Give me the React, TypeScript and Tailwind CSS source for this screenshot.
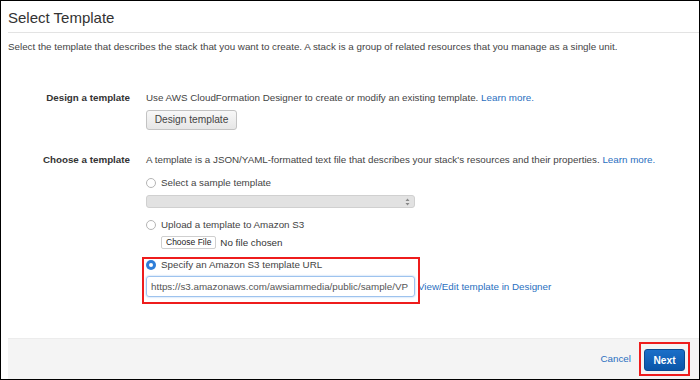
export default function App() {
	return (
		<div
			className="relative flex h-[380px] w-[700px] flex-col border border-black bg-white text-[#444]"
			style={{ fontFamily: '"Liberation Sans", Arial, sans-serif' }}
		>
			<div className="flex flex-1 flex-col pl-[7px]">
				{/* header */}
				<div className="border-b border-[#e3e3e3] pt-[7px] pb-[5px]">
					<h1 className="text-[15px] leading-[19px] text-[#333]">Select Template</h1>
				</div>
				<p className="mt-[7px] whitespace-nowrap text-[9.8px] leading-[14px]">
					Select the template that describes the stack that you want to create. A stack is a group of related resources that you manage as a single unit.
				</p>

				{/* design a template */}
				<div className="mt-[37px] flex gap-[16px] text-[9.8px] leading-[14px]">
					<div className="w-[122px] shrink-0 text-right font-bold text-[#333]">Design a template</div>
					<div className="flex flex-col items-start">
						<p className="whitespace-nowrap">
							Use AWS CloudFormation Designer to create or modify an existing template.{' '}
							<a className="text-[#2a6fc0]">Learn more.</a>
						</p>
						<button className="mt-[5px] h-[20px] w-[91px] rounded-[3px] border border-[#c3c3c3] bg-gradient-to-b from-[#f8f8f8] to-[#e6e6e6] text-[10.2px] text-[#444]">
							Design template
						</button>
					</div>
				</div>

				{/* choose a template */}
				<div className="mt-[23px] flex gap-[16px] text-[9.8px] leading-[14px]">
					<div className="w-[122px] shrink-0 text-right font-bold text-[#333]">Choose a template</div>
					<div className="flex flex-col items-start">
						<p className="whitespace-nowrap">
							A template is a JSON/YAML-formatted text file that describes your stack's resources and their properties.{' '}
							<a className="text-[#2a6fc0]">Learn more.</a>
						</p>
						<label className="mt-[9px] flex items-center gap-[5px]">
							<span className="h-[10px] w-[10px] rounded-full border border-[#b5b5b5] bg-white" />
							<span>Select a sample template</span>
						</label>
						<div className="mt-[5px] flex h-[13px] w-[269px] items-center justify-end rounded-[3px] border border-[#d0d0d0] bg-[#e2e2e2] pr-[4px]">
							<svg width="5" height="8" viewBox="0 0 5 8">
								<path d="M2.5 0.5 L4.5 3 H0.5 Z M2.5 7.5 L4.5 5 H0.5 Z" fill="#888" />
							</svg>
						</div>
						<label className="mt-[10px] flex items-center gap-[5px]">
							<span className="h-[10px] w-[10px] rounded-full border border-[#b5b5b5] bg-white" />
							<span>Upload a template to Amazon S3</span>
						</label>
						<div className="mt-[4px] ml-[15px] flex h-[13px] items-center gap-[4px]">
							<span className="flex h-[13px] items-center rounded-[2px] border border-[#cfcfcf] bg-white px-[4px] text-[8.5px] leading-none text-[#222]">
								Choose File
							</span>
							<span className="text-[9.8px] text-[#333]">No file chosen</span>
						</div>
						<label className="mt-[9px] flex items-center gap-[5px]">
							<span className="flex h-[10px] w-[10px] items-center justify-center rounded-full bg-[#2f7ed8]">
								<span className="h-[4px] w-[4px] rounded-full bg-white" />
							</span>
							<span>Specify an Amazon S3 template URL</span>
						</label>
						<div className="mt-[4px] flex items-center gap-[3px]">
							<div className="flex h-[21px] w-[269px] items-center overflow-hidden whitespace-nowrap rounded-[3px] border border-[#9ec3ee] px-[4px] text-[9.8px] text-[#555] shadow-[0_0_2px_#9ec3ee]">
								https://s3.amazonaws.com/awsiammedia/public/sample/VP
							</div>
							<a className="whitespace-nowrap text-[#2a6fc0]">View/Edit template in Designer</a>
						</div>
					</div>
				</div>

				{/* highlight annotation */}
				<div className="pointer-events-none absolute left-[141px] top-[256px] h-[47px] w-[278px] border-2 border-[#ee1c1c]" />

				{/* footer */}
				<div className="mt-auto flex h-[41px] items-center justify-end gap-[8px] border-t border-[#ececec] bg-[#f4f4f4] pr-[9px]">
					<a className="text-[9.8px] text-[#2a6fc0]">Cancel</a>
					<div className="border-2 border-[#ee1c1c] p-[3px]">
						<button className="h-[22px] w-[41px] rounded-[3px] border border-[#0a4a91] bg-gradient-to-b from-[#1a6fc9] to-[#0a56a8] text-[10.2px] font-bold text-white">
							Next
						</button>
					</div>
				</div>
			</div>
		</div>
	)
}
